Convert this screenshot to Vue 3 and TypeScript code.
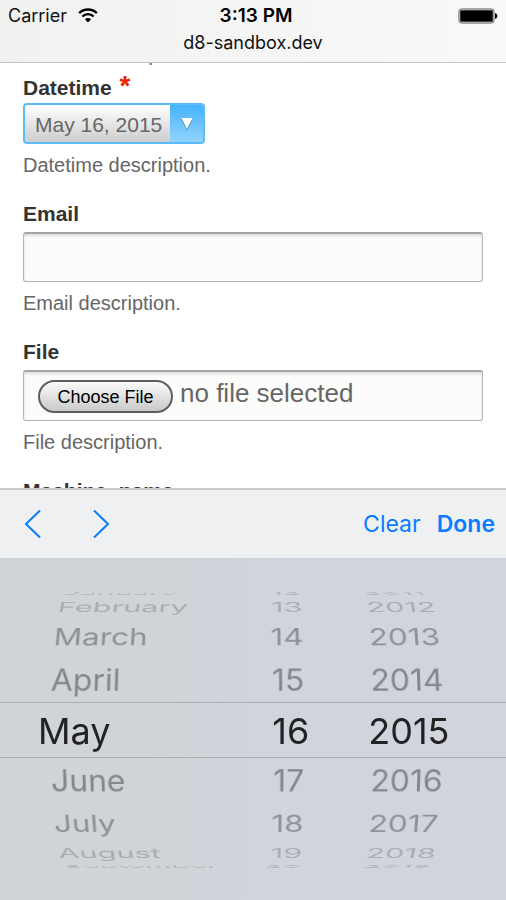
<script setup lang="ts">
import { reactive, ref } from 'vue'

interface Column {
  key: string
  label: string
  options: string[]
  selected: number
}

const months = [
  'January', 'February', 'March', 'April', 'May', 'June',
  'July', 'August', 'September', 'October', 'November', 'December',
]
const days = Array.from({ length: 31 }, (_, i) => String(i + 1))
const years = Array.from({ length: 30 }, (_, i) => String(2000 + i))

const columns = reactive<Column[]>([
  { key: 'month', label: 'Month', options: months, selected: 4 },
  { key: 'day', label: 'Day', options: days, selected: 15 },
  { key: 'year', label: 'Year', options: years, selected: 15 },
])

const email = ref('')

const STEP = 20
const RADIUS = 148

// Rows within four steps of the selection face the viewer.
function visibleRows(column: Column) {
  return column.options
    .map((text, index) => ({ text, index, offset: index - column.selected }))
    .filter((row) => Math.abs(row.offset) <= 4)
}

function rowStyle(offset: number) {
  const fade = [1, 0.44, 0.38, 0.22, 0.16]
  return {
    transform: `translateZ(${-RADIUS}px) rotateX(${-offset * STEP}deg) translateZ(${RADIUS}px)`,
    opacity: fade[Math.abs(offset)],
  }
}

function dateText() {
  const [m, d, y] = columns.map((c) => c.options[c.selected])
  return `${m} ${d}, ${y}`
}
</script>

<template>
  <div class="screen">
    <header class="browser-bar">
      <div class="status">
        <div class="carrier">
          <span>Carrier</span>
          <svg class="wifi" viewBox="0 0 20 15" aria-hidden="true">
            <path d="M1.2 5.2a12.4 12.4 0 0 1 17.6 0" />
            <path d="M4.4 8.5a7.9 7.9 0 0 1 11.2 0" />
            <path class="solid" d="M6.9 11.2a4.4 4.4 0 0 1 6.2 0L10 14.4z" />
          </svg>
        </div>
        <strong class="clock">3:13 PM</strong>
        <svg class="battery" viewBox="0 0 40 16" aria-hidden="true">
          <rect class="shell" x="1" y="1" width="35" height="14" rx="2.5" />
          <rect x="2.2" y="2.2" width="32.6" height="11.6" rx="1" />
          <path d="M37 5.2c1.6.3 2.3 1.4 2.3 2.8s-.7 2.5-2.3 2.8z" />
        </svg>
      </div>
      <div class="address">d8-sandbox.dev</div>
    </header>

    <main class="content">
      <form class="form" @submit.prevent>
        <p class="description leading">Datelist description.</p>

        <div class="field">
          <label class="label" for="datetime">Datetime <span class="required">*</span></label>
          <button id="datetime" class="date" type="button">
            <span class="date-value">{{ dateText() }}</span>
            <span class="date-arrow">
              <svg viewBox="0 0 14 14" aria-hidden="true">
                <path class="shade" d="M1 2h12L7 13.5z" />
                <path d="M1.5 1h11L7 12z" />
              </svg>
            </span>
          </button>
          <p class="description">Datetime description.</p>
        </div>

        <div class="field">
          <label class="label" for="email">Email</label>
          <input id="email" v-model="email" class="box" type="email">
          <p class="description">Email description.</p>
        </div>

        <div class="field">
          <label class="label" for="file">File</label>
          <div class="box file">
            <input id="file" class="file-input" type="file">
            <span class="file-status">no file selected</span>
          </div>
          <p class="description">File description.</p>
        </div>

        <div class="field">
          <label class="label" for="machine">Machine_name</label>
          <input id="machine" class="box" type="text">
        </div>
      </form>
    </main>

    <section class="keyboard">
      <div class="toolbar">
        <button class="tool step" type="button" aria-label="Previous">
          <svg viewBox="0 0 18 30" aria-hidden="true"><path d="M16 1.5 2 15l14 13.5" /></svg>
        </button>
        <button class="tool step" type="button" aria-label="Next">
          <svg viewBox="0 0 18 30" aria-hidden="true"><path d="m2 1.5 14 13.5L2 28.5" /></svg>
        </button>
        <button class="tool clear" type="button">Clear</button>
        <button class="tool done" type="button">Done</button>
      </div>

      <div class="picker">
        <div class="wheels">
          <ul v-for="column in columns" :key="column.key" class="wheel" :class="column.key" :aria-label="column.label">
            <li
              v-for="row in visibleRows(column)"
              :key="row.index"
              class="row"
              :class="{ current: row.offset === 0 }"
              :style="rowStyle(row.offset)"
            >
              <button class="option" type="button" @click="column.selected = row.index">{{ row.text }}</button>
            </li>
          </ul>
        </div>
      </div>
    </section>
  </div>
</template>

<style>
body {
  margin: 0;
}
</style>

<style scoped>
.screen {
  display: flex;
  flex-direction: column;
  height: 100vh;
  overflow: hidden;
  background: #fff;
  font-family: "Liberation Sans", Arial, sans-serif;
}

.browser-bar {
  flex: none;
  padding: 3px 8px 5px;
  border-bottom: 1px solid #c4c4c4;
  background: linear-gradient(90deg, #f1f1f0, #f9f9f9);
  color: #111;
  font-family: Inter, sans-serif;
  font-size: 18px;
}

.status {
  display: grid;
  grid-template-columns: 1fr auto 1fr;
  align-items: center;
  height: 25px;
}

.carrier {
  display: flex;
  align-items: center;
  gap: 11px;
}

.wifi {
  width: 20px;
  height: 15px;
  fill: none;
  stroke: #000;
  stroke-width: 2.4;
}

.wifi .solid {
  fill: #000;
  stroke: none;
}

.clock {
  padding-left: 6px;
  color: #000;
  font-size: 19px;
  font-weight: 600;
}

.battery {
  justify-self: end;
  width: 40px;
  height: 16px;
}

.battery .shell {
  fill: #fff;
  stroke: #555;
  stroke-width: 1;
}

.address {
  padding-top: 1px;
  line-height: 28px;
  text-align: center;
}

.content {
  flex: 1;
  min-height: 0;
  overflow: hidden;
}

.form {
  padding: 0 23px;
}

.field {
  margin-bottom: 22px;
}

.label {
  display: block;
  margin-bottom: 5px;
  color: #333;
  font-size: 21px;
  font-weight: bold;
  line-height: 26px;
}

.required {
  margin-left: 2px;
  color: #e20;
  font-size: 28px;
  line-height: 20px;
}

.description {
  margin: 7px 0 0;
  color: #666;
  font-size: 20px;
  line-height: 28px;
}

.leading {
  margin: -23px 0 7px;
}

.date {
  display: flex;
  height: 41px;
  margin-top: -3px;
  padding: 0;
  overflow: hidden;
  border: 2px solid #5bbcfb;
  border-radius: 4px;
  background: linear-gradient(#fff, #cdcdcd);
  color: #666;
  font-family: inherit;
  font-size: 21px;
}

.date-value {
  padding: 0 8px 0 10px;
  line-height: 39px;
}

.date-arrow {
  display: flex;
  align-items: center;
  justify-content: center;
  width: 33px;
  height: 37px;
  background: linear-gradient(#45b3fc, #91d3fd);
}

.date-arrow svg {
  width: 14px;
  height: 14px;
  fill: #fff;
}

.date-arrow .shade {
  fill: #5b86a3;
}

.box {
  display: block;
  box-sizing: border-box;
  width: 100%;
  height: 50px;
  border: 1px solid #b5b5b5;
  border-top: 2px solid #a5a5a5;
  border-radius: 3px;
  background: #fcfcfa;
  box-shadow: inset 0 2px 3px rgba(0, 0, 0, 0.12);
  color: #555;
  font-size: 26px;
}

.file {
  display: flex;
  align-items: center;
  gap: 7px;
  height: 51px;
  padding: 0 14px;
}

.file-input {
  width: 135px;
  height: 33px;
  overflow: hidden;
  font-size: 18px;
}

.file-input::file-selector-button {
  box-sizing: border-box;
  width: 100%;
  height: 33px;
  margin: 0;
  padding: 3px 0 0;
  border: 2px solid #5e5e5e;
  border-radius: 17px;
  background: linear-gradient(#fbfbfb, #c9c9c9);
  color: #000;
  font-family: "Liberation Sans", Arial, sans-serif;
  font-size: 18px;
}

.file-status {
  padding-bottom: 6px;
  color: #666;
  font-size: 26px;
  line-height: 30px;
}

.keyboard {
  flex: none;
  font-family: Inter, sans-serif;
}

.toolbar {
  display: flex;
  align-items: center;
  height: 68px;
  padding: 0 11px 0 24px;
  border-top: 2px solid #cacbcc;
  background: #eff0f2;
}

.tool {
  padding: 0;
  border: 0;
  background: none;
  color: #0a7cff;
  font-family: inherit;
  font-size: 23px;
  line-height: 30px;
}

.step {
  margin-right: 50px;
}

.step svg {
  display: block;
  width: 18px;
  height: 30px;
  fill: none;
  stroke: #0a7cff;
  stroke-width: 2;
}

.clear {
  margin-left: auto;
}

.done {
  margin-left: 16px;
  font-weight: 600;
}

.picker {
  padding: 32px 0 30px;
  background:
    linear-gradient(#aaadb2, #aaadb2) 0 144px / 100% 1px no-repeat,
    linear-gradient(#aaadb2, #aaadb2) 0 199px / 100% 1px no-repeat,
    linear-gradient(90deg, #d0d4d8 0 30%, #d1d4dc 55%);
}

.wheels {
  display: grid;
  grid-template-columns: 48fr 24fr 28fr;
  height: 280px;
  overflow: hidden;
  perspective: 1800px;
}

.wheel {
  display: grid;
  align-items: center;
  margin: 0;
  padding: 0;
  list-style: none;
  transform-style: preserve-3d;
}

.row {
  grid-area: 1 / 1;
  padding-top: 2px;
  font-size: 32px;
  line-height: 44px;
}

.current {
  font-size: 36px;
}

.option {
  display: block;
  width: 100%;
  padding: 0;
  border: 0;
  background: none;
  color: #222;
  font: inherit;
  text-align: left;
}

.month .option {
  padding-left: 50px;
}

.month .current .option {
  padding-left: 38px;
}

.day .option {
  padding-right: 60px;
  text-align: right;
}

.day .current .option {
  padding-right: 55px;
}

.year .option {
  padding-left: 7px;
}

.year .current .option {
  padding-left: 4px;
}
</style>
